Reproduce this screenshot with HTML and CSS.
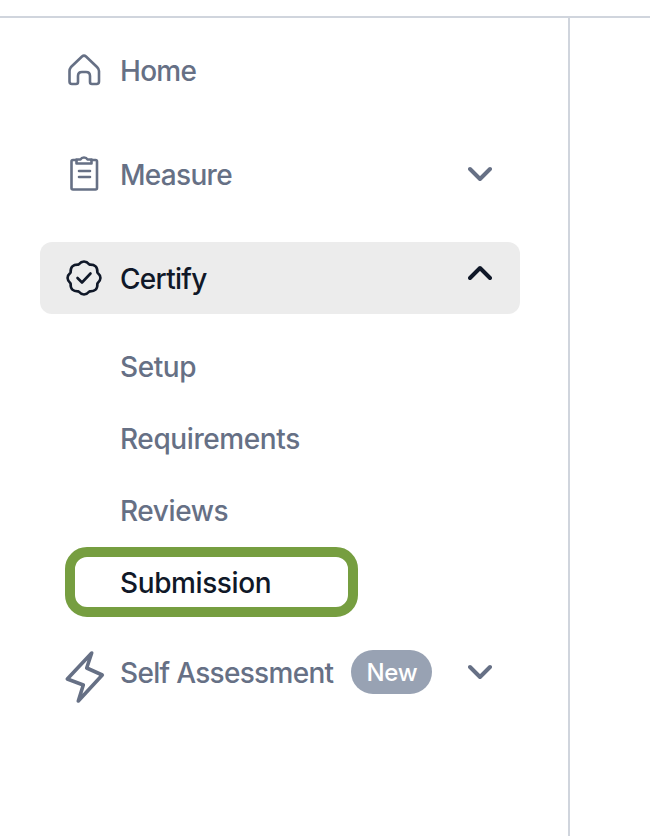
FILE: index.html
```html
<!DOCTYPE html>
<html>
<head>
    <meta charset="UTF-8">
    <title>Certify - Submission</title>
    <link rel="stylesheet" href="styles.css">
</head>
<body>
    <div id="layout">
        <nav id="sidebar">
            <a class="nav-row">
                <svg class="nav-icon" viewBox="0 0 40 40"><path d="M7 17 L18 6.5 Q20 4.7 22 6.5 L33 17 Q35 19 35 21 V31.5 Q35 34 32.5 34 H28 Q26 34 26 32 V26 Q26 22 22 22 H18 Q14 22 14 26 V32 Q14 34 12 34 H8 Q5.5 34 5.5 31.5 V21 Q5.5 19 7 17Z"/></svg>
                <span class="nav-label">Home</span>
            </a>
            <a class="nav-row">
                <svg class="nav-icon" viewBox="0 0 40 40"><path d="M12.5 6 H9 Q7.5 6 7.5 7.5 V34 Q7.5 35.5 9 35.5 H31.5 Q33 35.5 33 34 V7.5 Q33 6 31.5 6 H27.5"/><path d="M12.5 9.5 V5.5 H16.5 Q17.5 3.5 20 3.5 Q22.5 3.5 23.5 5.5 H27.5 V9.5 Z"/><path d="M15 17 H26 M15 23 H26"/></svg>
                <span class="nav-label">Measure</span>
                <svg class="chevron" viewBox="0 0 24 16"><path d="M2 3 L12 13 L22 3"/></svg>
            </a>
            <a class="nav-row active">
                <svg class="nav-icon" viewBox="0 0 40 40"><path d="M33.4 14.45 Q39.5 20 33.4 25.55 Q33.8 33.8 25.55 33.4 Q20 39.5 14.45 33.4 Q6.2 33.8 6.6 25.55 Q0.5 20 6.6 14.45 Q6.2 6.2 14.45 6.6 Q20 0.5 25.55 6.6 Q33.8 6.2 33.4 14.45Z"/><path d="M13.5 20 L18 24.5 L26.5 15.5"/></svg>
                <span class="nav-label">Certify</span>
                <svg class="chevron chevron-up" viewBox="0 0 24 16"><path d="M2 13 L12 3 L22 13"/></svg>
            </a>
            <div class="sub-list">
                <a class="sub-row">Setup</a>
                <a class="sub-row">Requirements</a>
                <a class="sub-row">Reviews</a>
                <a class="sub-row focused">Submission</a>
            </div>
            <a class="nav-row">
                <svg class="nav-icon bolt" viewBox="0 0 40 52"><path d="M27.7 2 L3.3 28 L19.3 34 L14.3 50 L38.3 24 L22.7 17 Z"/></svg>
                <span class="nav-label">Self Assessment</span>
                <span class="badge">New</span>
                <svg class="chevron" viewBox="0 0 24 16"><path d="M2 3 L12 13 L22 3"/></svg>
            </a>
        </nav>
    </div>
</body>
</html>
```

FILE: styles.css
```css
html, body {
    margin: 0;
    padding: 0;
    height: 100%;
    background: #fff;
}

body {
    font-family: Inter, "Liberation Sans", sans-serif;
    padding-top: 16px;
    box-sizing: border-box;
    overflow: hidden;
}

#layout {
    border-top: 2px solid #d0d5dd;
    height: 100%;
}

#sidebar {
    width: 568px;
    height: 100%;
    box-sizing: content-box;
    border-right: 2px solid #d0d5dd;
    padding-top: 16px;
    display: flex;
    flex-direction: column;
}

.nav-row {
    display: flex;
    align-items: center;
    width: 480px;
    height: 72px;
    flex-shrink: 0;
    margin-left: 40px;
    margin-bottom: 32px;
    padding: 0 20px 0 24px;
    box-sizing: border-box;
    border-radius: 12px;
    color: #667085;
    font-size: 28px;
    font-weight: 500;
}

.nav-row.active {
    background: #ececec;
    color: #101828;
    margin-bottom: 16px;
}

.nav-icon {
    width: 40px;
    height: 40px;
    flex-shrink: 0;
    margin-right: 16px;
    fill: none;
    stroke: currentColor;
    stroke-width: 2.6;
    stroke-linejoin: round;
    stroke-linecap: round;
    overflow: visible;
}

.nav-icon.bolt {
    height: 52px;
    margin-top: 10px;
    stroke-width: 3.6;
}

.nav-label {
    padding-top: 2px;
    line-height: 40px;
    letter-spacing: -0.7px;
}

.chevron {
    width: 24px;
    height: 16px;
    margin-left: auto;
    margin-right: 8px;
    flex-shrink: 0;
    fill: none;
    stroke: currentColor;
    stroke-width: 4;
    stroke-linecap: round;
    stroke-linejoin: round;
}

.chevron-up {
    margin-bottom: 10px;
}

.sub-list {
    display: flex;
    flex-direction: column;
    margin-bottom: 18px;
}

.sub-row {
    display: flex;
    align-items: center;
    height: 72px;
    padding-top: 2px;
    padding-left: 120px;
    box-sizing: border-box;
    color: #667085;
    font-size: 28px;
    font-weight: 500;
    letter-spacing: -0.4px;
}

.sub-row.focused {
    width: 293px;
    height: 70px;
    margin: 1px 0 1px 65px;
    padding-left: 45px;
    border: 10px solid #769e40;
    border-radius: 22px;
    color: #101828;
}

.badge {
    margin-left: 18px;
    width: 81px;
    height: 44px;
    border-radius: 22px;
    background: #98a2b3;
    color: #fff;
    font-size: 24px;
    line-height: 46px;
    text-align: center;
    letter-spacing: -0.4px;
}
```
